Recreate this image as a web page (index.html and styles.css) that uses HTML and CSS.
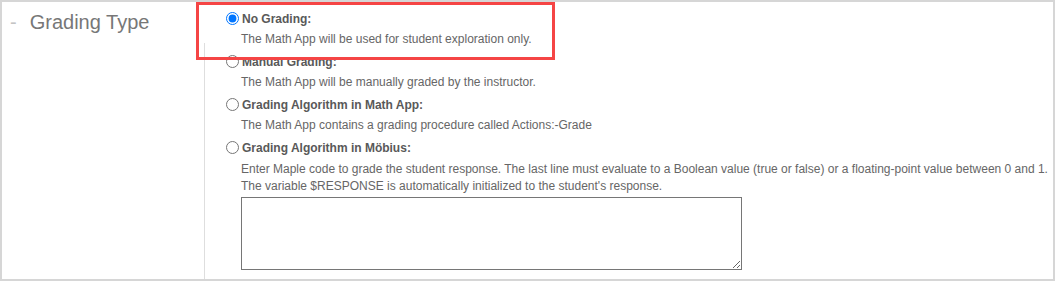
FILE: index.html
```html
<!DOCTYPE html>
<html lang="en">
<head>
  <meta charset="UTF-8" />
  <title>Grading Type</title>
  <link rel="stylesheet" href="styles.css">
</head>
<body>
  <div class="marco">
    <div class="lado">
      <h2 class="titulo"><span class="guion">-</span>Grading Type</h2>
    </div>
    <div class="opciones">
      <div class="opcion">
        <label class="cabecera"><input type="radio" name="grading" checked> No Grading:</label>
        <p class="desc">The Math App will be used for student exploration only.</p>
      </div>
      <div class="opcion">
        <label class="cabecera"><input type="radio" name="grading"> Manual Grading:</label>
        <p class="desc">The Math App will be manually graded by the instructor.</p>
      </div>
      <div class="opcion">
        <label class="cabecera"><input type="radio" name="grading"> Grading Algorithm in Math App:</label>
        <p class="desc">The Math App contains a grading procedure called Actions:-Grade</p>
      </div>
      <div class="opcion">
        <label class="cabecera"><input type="radio" name="grading"> Grading Algorithm in Möbius:</label>
        <p class="desc desc-larga">Enter Maple code to grade the student response. The last line must evaluate to a Boolean value (true or false) or a floating-point value between 0 and 1.<br>The variable $RESPONSE is automatically initialized to the student's response.</p>
        <textarea class="codigo"></textarea>
      </div>
    </div>
    <div class="resaltado"></div>
  </div>
</body>
</html>
```

FILE: styles.css
```css
body {
  margin: 0;
  font-family: 'Liberation Sans', Arial, sans-serif;
  background-color: #fff;
}

.marco {
  position: relative;
  display: flex;
  height: 281px;
  box-sizing: border-box;
  border: 2px solid #d6d6d6;
  background-color: #fff;
}

/* la línea divisoria empieza por debajo del título */
.lado {
  width: 203px;
  padding: 8px 0 0 8px;
  box-sizing: border-box;
  flex-shrink: 0;
  background: linear-gradient(#dedede, #dedede) no-repeat right bottom;
  background-size: 1px calc(100% - 41px);
}

.titulo {
  margin: 0;
  font-size: 20px;
  font-weight: normal;
  line-height: 24px;
  color: #777;
}

.guion {
  color: #c4c4c4;
  margin-right: 13px;
}

.opciones {
  flex: 1;
  padding: 6px 0 0 21px;
}

.cabecera {
  display: flex;
  align-items: center;
  height: 21px;
  font-size: 12px;
  font-weight: bold;
  color: #595959;
}

.cabecera input {
  width: 13px;
  height: 13px;
  margin: 0 3px 0 0;
}

.desc {
  margin: 0 0 0 15px;
  padding: 2px 0 3px;
  font-size: 12px;
  line-height: 17px;
  color: #666;
}

.desc-larga {
  padding: 3px 0 0;
}

.codigo {
  display: block;
  margin: 2px 0 0 15px;
  width: 501px;
  height: 73px;
  box-sizing: border-box;
  border: 1px solid #767676;
  font-family: 'Liberation Mono', monospace;
}

/* marco rojo de anotación */
.resaltado {
  position: absolute;
  left: 194px;
  top: 0;
  width: 359px;
  height: 58px;
  box-sizing: border-box;
  border: 3px solid #f54545;
  pointer-events: none;
}
```
